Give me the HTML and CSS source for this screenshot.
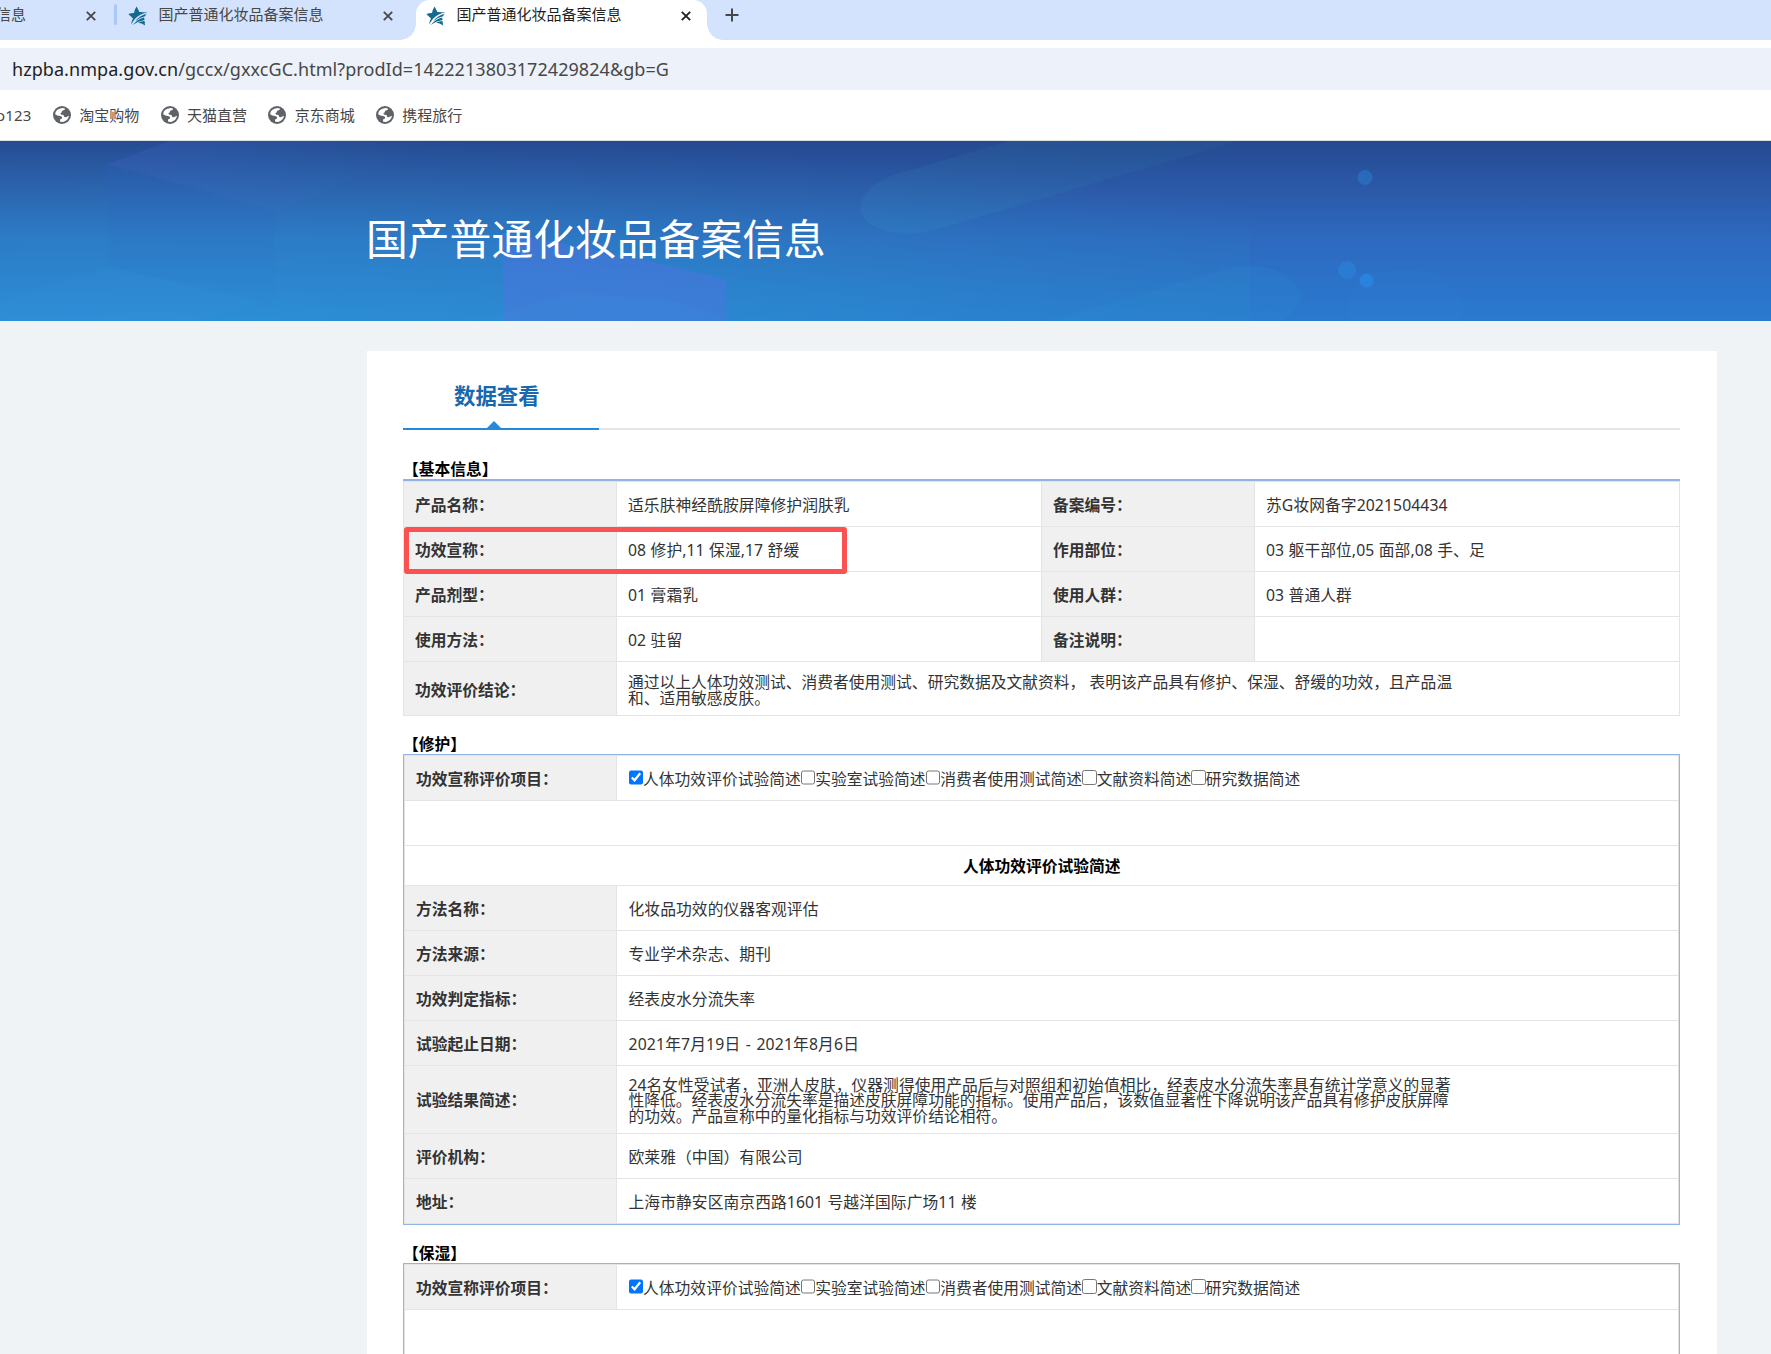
FILE: index.html
```html
<!doctype html>
<html lang="zh-CN">
    <head>
        <meta charset="UTF-8" />
        <meta name="viewport" content="width=device-width, initial-scale=1.0" />
        <title>国产普通化妆品备案信息</title>
        <link rel="stylesheet" href="styles.css">
    </head>
    <body>
        <!-- shared icons -->
        <svg class="defs" width="0" height="0">
            <symbol id="star" viewBox="0 0 20 20">
                <path fill="#136a90" d="M8.6 0.5 L11.4 5.9 Q15.500 5.900 19.8 6.600 Q11.500 7.800 6.600 13.200 L3 18.500 Q3.400 15.500 5 12.600 L0.300 8 Q3.600 6.800 6 6.900 Q6.700 3.400 8.600 0.500z" />
                <path fill="#136a90" d="M18.400 7.800 Q11.500 9.800 7.200 15.200 Q11.800 11.200 17 10.200z" />
                <path fill="#136a90" d="M16 11.400 Q10 12.600 4.600 19 Q10 15.200 16.600 14z" />
                <path fill="#136a90" d="M16.600 15 Q13 15.200 10 16.800 Q14 17.200 17 19.400z" />
            </symbol>
            <symbol id="close" viewBox="0 0 10 10">
                <path d="M0.8 0.8 L9.2 9.2 M9.2 0.8 L0.8 9.2" stroke="currentColor" stroke-width="1.8" />
            </symbol>
            <symbol id="globe" viewBox="0 0 18 18">
                <circle cx="9" cy="9" r="9" fill="#5f6368" />
                <path fill="#fff" d="M9.6 2 Q11 2.1 12.2 2.8 Q11.6 4.4 10 4.5 Q8.8 4.6 8.8 6 Q8.6 7 7.4 7.1 Q7.6 8.6 8.6 8.8 Q10.9 8.6 11 10.2 Q11.2 11.4 12.6 11.2 Q14.2 10.4 16 9.8 Q15.2 14.8 10 16 Q8.2 16.1 7 15.6 L7 13.4 Q9.2 13 9.2 11.4 Q9 9.9 6.8 9.9 Q4.4 9.8 2.1 8.2 Q2.4 3 9.6 2z" />
            </symbol>
        </svg>

        <div class="tab-strip">
            <div class="tab tab-cut">
                <span class="tab-title">信息</span>
                <svg class="close"><use href="#close" /></svg>
            </div>
            <div class="tab">
                <svg class="favicon"><use href="#star" /></svg>
                <span class="tab-title">国产普通化妆品备案信息</span>
                <svg class="close"><use href="#close" /></svg>
            </div>
            <div class="tab active">
                <svg class="favicon"><use href="#star" /></svg>
                <span class="tab-title">国产普通化妆品备案信息</span>
                <svg class="close"><use href="#close" /></svg>
            </div>
            <svg class="new-tab" viewBox="0 0 14 14"><path d="M7 0.5 V13.5 M0.5 7 H13.5" stroke="#474747" stroke-width="2" /></svg>
        </div>
        <div class="address-bar">
            <span class="host">hzpba.nmpa.gov.cn</span><span class="path">/gccx/gxxcGC.html?prodId=1422213803172429824&amp;gb=G</span>
        </div>
        <div class="bookmarks">
            <span class="bookmark bookmark-cut">o123</span>
            <span class="bookmark"><svg><use href="#globe" /></svg>淘宝购物</span>
            <span class="bookmark"><svg><use href="#globe" /></svg>天猫直营</span>
            <span class="bookmark"><svg><use href="#globe" /></svg>京东商城</span>
            <span class="bookmark"><svg><use href="#globe" /></svg>携程旅行</span>
        </div>

        <div class="banner">
            <svg class="banner-bg" viewBox="0 0 1771 180" preserveAspectRatio="none">
                <defs>
                    <radialGradient id="leftGlow" cx=".12" cy="1.1" r="1.15">
                        <stop offset="0" stop-color="#2fa4de" stop-opacity=".55" />
                        <stop offset=".5" stop-color="#2c98d0" stop-opacity=".38" />
                        <stop offset="1" stop-color="#2a88b8" stop-opacity="0" />
                    </radialGradient>
                    <linearGradient id="pill" x1="0" x2="1" y1="1" y2="0">
                        <stop offset="0" stop-color="#32a0d0" stop-opacity=".14" />
                        <stop offset="1" stop-color="#32a0a0" stop-opacity=".06" />
                    </linearGradient>
                    <linearGradient id="cube" x1="0" x2="1" y1="0" y2="0">
                        <stop offset="0" stop-color="#4864d0" stop-opacity=".25" />
                        <stop offset="1" stop-color="#3878c8" stop-opacity="0" />
                    </linearGradient>
                    <linearGradient id="side" x1="0" x2="0" y1="0" y2="1">
                        <stop offset="0" stop-color="#2860c0" stop-opacity=".18" />
                        <stop offset="1" stop-color="#2860c0" stop-opacity="0" />
                    </linearGradient>
                </defs>
                <rect width="1250" height="180" fill="url(#leftGlow)" />
                <polygon points="108,23 170,0 430,0 400,20 275,70" fill="url(#cube)" />
                <polygon points="108,23 275,70 275,180 258,160 108,126" fill="url(#side)" />
                <polygon points="0,160 108,126 258,160 200,180 0,180" fill="#3a90e0" opacity=".13" />
                <polygon points="503,180 503,92 540,98 640,118 725,138 725,180" fill="#5074e0" opacity=".48" />
                <polygon points="478,180 570,152 670,158 730,180" fill="#3c94dc" opacity=".15" />
                <path d="M1009 0 L894 34 C855 48 850 76 880 88 C900 95 920 93 938 88 L1238 0z" fill="url(#pill)" />
                <path d="M1050 180 L1226 128 C1265 118 1300 135 1300 155 Q1300 170 1280 180z" fill="#30a0d8" opacity=".12" />
                <ellipse cx="1405" cy="168" rx="58" ry="40" fill="#3888e0" opacity=".07" />
                <circle cx="1365" cy="36.500" r="7.500" fill="#2a78cc" opacity=".6" />
                <circle cx="1347" cy="129" r="9" fill="#2a88e0" opacity=".5" />
                <circle cx="1366.500" cy="139.500" r="7" fill="#2a8ae4" opacity=".7" />
            </svg>
            <h1>国产普通化妆品备案信息</h1>
        </div>

        <div class="container">
            <div class="tabs">
                <div class="tabs-item">数据查看</div>
            </div>

            <!-- 基本信息 -->
            <h2>【基本信息】</h2>
            <div class="basic">
                <table class="info">
                    <colgroup><col class="c-label"><col class="c-value"><col class="c-label"><col class="c-value"></colgroup>
                    <tr>
                        <th>产品名称：</th><td>适乐肤神经酰胺屏障修护润肤乳</td>
                        <th>备案编号：</th><td>苏G妆网备字2021504434</td>
                    </tr>
                    <tr class="marked">
                        <th>功效宣称：<span class="mark"></span></th><td>08 修护,11 保湿,17 舒缓</td>
                        <th>作用部位：</th><td>03 躯干部位,05 面部,08 手、足</td>
                    </tr>
                    <tr>
                        <th>产品剂型：</th><td>01 膏霜乳</td>
                        <th>使用人群：</th><td>03 普通人群</td>
                    </tr>
                    <tr>
                        <th>使用方法：</th><td>02 驻留</td>
                        <th>备注说明：</th><td></td>
                    </tr>
                    <tr class="two-lines">
                        <th>功效评价结论：</th>
                        <td colspan="3"><p>通过以上人体功效测试、消费者使用测试、研究数据及文献资料， 表明该产品具有修护、保湿、舒缓的功效，且产品温<br>和、适用敏感皮肤。</p></td>
                    </tr>
                </table>
            </div>

            <!-- 修护 -->
            <h2>【修护】</h2>
            <div class="frame">
                <table class="info">
                    <colgroup><col class="c-first"><col></colgroup>
                    <tr>
                        <th>功效宣称评价项目：</th>
                        <td class="checks"><input type="checkbox" checked>人体功效评价试验简述<input type="checkbox">实验室试验简述<input type="checkbox">消费者使用测试简述<input type="checkbox">文献资料简述<input type="checkbox">研究数据简述</td>
                    </tr>
                    <tr><td colspan="2"></td></tr>
                    <tr class="caption"><td colspan="2">人体功效评价试验简述</td></tr>
                    <tr><th>方法名称：</th><td>化妆品功效的仪器客观评估</td></tr>
                    <tr><th>方法来源：</th><td>专业学术杂志、期刊</td></tr>
                    <tr><th>功效判定指标：</th><td>经表皮水分流失率</td></tr>
                    <tr><th>试验起止日期：</th><td class="date">2021年7月19日 - 2021年8月6日</td></tr>
                    <tr class="three-lines">
                        <th>试验结果简述：</th>
                        <td><p>24名女性受试者，亚洲人皮肤，仪器测得使用产品后与对照组和初始值相比，经表皮水分流失率具有统计学意义的显著<br>性降低。经表皮水分流失率是描述皮肤屏障功能的指标。使用产品后，该数值显著性下降说明该产品具有修护皮肤屏障<br>的功效。产品宣称中的量化指标与功效评价结论相符。</p></td>
                    </tr>
                    <tr><th>评价机构：</th><td>欧莱雅（中国）有限公司</td></tr>
                    <tr><th>地址：</th><td>上海市静安区南京西路1601 号越洋国际广场11 楼</td></tr>
                </table>
            </div>

            <!-- 保湿 -->
            <h2>【保湿】</h2>
            <div class="frame">
                <table class="info">
                    <colgroup><col class="c-first"><col></colgroup>
                    <tr>
                        <th>功效宣称评价项目：</th>
                        <td class="checks"><input type="checkbox" checked>人体功效评价试验简述<input type="checkbox">实验室试验简述<input type="checkbox">消费者使用测试简述<input type="checkbox">文献资料简述<input type="checkbox">研究数据简述</td>
                    </tr>
                    <tr class="rest"><td colspan="2"></td></tr>
                </table>
            </div>
        </div>
    </body>
</html>
```

FILE: styles.css
```css
* {
    box-sizing: border-box;
}
body {
    margin: 0;
    height: 1354px;
    overflow: hidden;
    background-color: #eff3f6;
    font-family: "Noto Sans", "Noto Sans CJK SC", sans-serif;
    font-size: 15.75px;
    color: #333;
}
.defs {
    position: absolute;
}

/* browser tabs */
.tab-strip {
    display: flex;
    height: 40px;
    background-color: #d3e3fd;
    font-size: 15px;
    color: #474747;
}
.tab {
    display: flex;
    align-items: center;
    width: 298px;
    height: 31px;
    padding: 0 22px 0 11px;
}
.tab-cut {
    width: 117px;
    padding: 0 21px 0 0;
    position: relative;
}
.tab-cut .tab-title {
    margin-left: -4px;
}
.tab-cut::after {
    content: "";
    position: absolute;
    right: 0;
    top: 4px;
    width: 3px;
    height: 21px;
    border-radius: 2px;
    background-color: #a8c7fa;
}
.tab.active {
    position: relative;
    width: 291px;
    height: 40px;
    margin-left: 1px;
    padding: 0 16px 9px 10px;
    background-color: #fff;
    border-radius: 14px 14px 0 0;
    color: #1f1f1f;
}
.tab.active::before, .tab.active::after {
    content: "";
    position: absolute;
    bottom: 0;
    width: 16px;
    height: 16px;
    background: radial-gradient(circle at 0 0, transparent 15.5px, #fff 16px);
}
.tab.active::before {
    left: -16px;
}
.tab.active::after {
    right: -16px;
    transform: scaleX(-1);
}
.favicon {
    width: 20px;
    height: 20px;
    margin-right: 10.5px;
}
.tab-title {
    line-height: 29px;
    padding-bottom: 2px;
    white-space: nowrap;
}
.close {
    width: 10px;
    height: 10px;
    margin-left: auto;
}
.new-tab {
    width: 14px;
    height: 14px;
    margin: 8px 0 0 18px;
}

/* address bar */
.address-bar {
    height: 42px;
    margin-top: 8px;
    padding-left: 12px;
    line-height: 42px;
    background-color: #ecf1fa;
    box-shadow: 0 -8px 0 #fff;
    font-size: 18px;
    letter-spacing: 0.06px;
    white-space: nowrap;
}
.host {
    color: #1f1f1f;
}
.path {
    color: #474747;
}

/* bookmarks */
.bookmarks {
    display: flex;
    align-items: center;
    height: 51px;
    padding-bottom: 1px;
    background-color: #fff;
    border-bottom: 1px solid #dcdfe0;
    font-size: 15px;
    color: #474747;
}
.bookmark {
    display: flex;
    align-items: center;
    width: 107.7px;
    white-space: nowrap;
}
.bookmark svg {
    width: 18px;
    height: 18px;
    margin-right: 8.3px;
}
.bookmark-cut {
    width: 57px;
    margin-left: -4px;
    letter-spacing: 0.2px;
}

/* banner */
.banner {
    position: relative;
    height: 180px;
    padding-left: 366px;
    background: linear-gradient(#254a91, #2c5bab 30%, #2d6ac0 55%, #297ad0);
}
.banner-bg {
    position: absolute;
    left: 0;
    top: 0;
    width: 100%;
    height: 100%;
}
h1 {
    position: relative;
    margin: 0;
    line-height: 195px;
    font-size: 41.8px;
    font-weight: normal;
    color: #fff;
}

/* content */
.container {
    width: 1350px;
    height: 1100px;
    margin: 30px 0 0 367px;
    padding: 24px 37px 0 36px;
    background-color: #fff;
}
.tabs {
    height: 55px;
    border-bottom: 2px solid #e6e6e6;
}
.tabs-item {
    position: relative;
    width: 196px;
    height: 55px;
    border-bottom: 2px solid #2289dc;
    line-height: 41px;
    text-indent: 51px;
    font-size: 21.4px;
    font-weight: bold;
    color: #1768af;
}
.tabs-item::after {
    content: "";
    position: absolute;
    left: 84px;
    bottom: 0;
    border: 7.5px solid transparent;
    border-top: 0;
    border-bottom-color: #2289dc;
}
h2 {
    margin: 0;
    height: 38px;
    padding-top: 17px;
    line-height: 22px;
    font-size: 15.75px;
    font-weight: bold;
    color: #000;
}
.tabs + h2 {
    height: 49px;
    padding-top: 28px;
}
.basic {
    border-top: 2px solid #93b2e6;
}
.frame {
    border: 1px solid #93b5e4;
}
.info {
    width: 100%;
    table-layout: fixed;
    border-collapse: collapse;
    background-color: #fff;
}
.info tr {
    height: 45px;
}
.info th, .info td {
    padding: 2px 11px 0;
    border: 1px solid #e4e4e4;
    line-height: 22px;
    text-align: left;
    white-space: nowrap;
}
.info th {
    background-color: #f0f0f0;
    font-weight: bold;
}
.info td {
    letter-spacing: 0.08px;
    word-spacing: 0.2px;
}
.info .date {
    letter-spacing: 0.15px;
    word-spacing: 1.2px;
}
.frame th, .frame td {
    padding-top: 1px;
}
.frame td {
    padding-left: 11.5px;
}
.c-label {
    width: 213px;
}
.c-first {
    width: 212px;
}
.info p {
    margin: 0;
    padding-top: 2px;
    line-height: 15.2px;
    letter-spacing: 0.02px;
    word-spacing: 0;
}
.info tr.two-lines {
    height: 54px;
}
.info tr.three-lines {
    height: 68px;
}
.info tr.caption {
    height: 40px;
}
.info tr.rest {
    height: 120px;
}
.info .caption td {
    text-align: center;
    font-weight: bold;
    letter-spacing: 0;
    color: #000;
}
.info .checks {
    letter-spacing: 0.01px;
}
.checks input {
    width: 14.6px;
    height: 14.6px;
    margin: 0;
    vertical-align: 0;
}

/* red highlight over the claim row */
.marked th:first-child {
    position: relative;
}
.mark {
    position: absolute;
    left: 0;
    top: 0;
    width: 443px;
    height: 47px;
    border: 5px solid #fb5251;
    border-radius: 3px;
}
```
